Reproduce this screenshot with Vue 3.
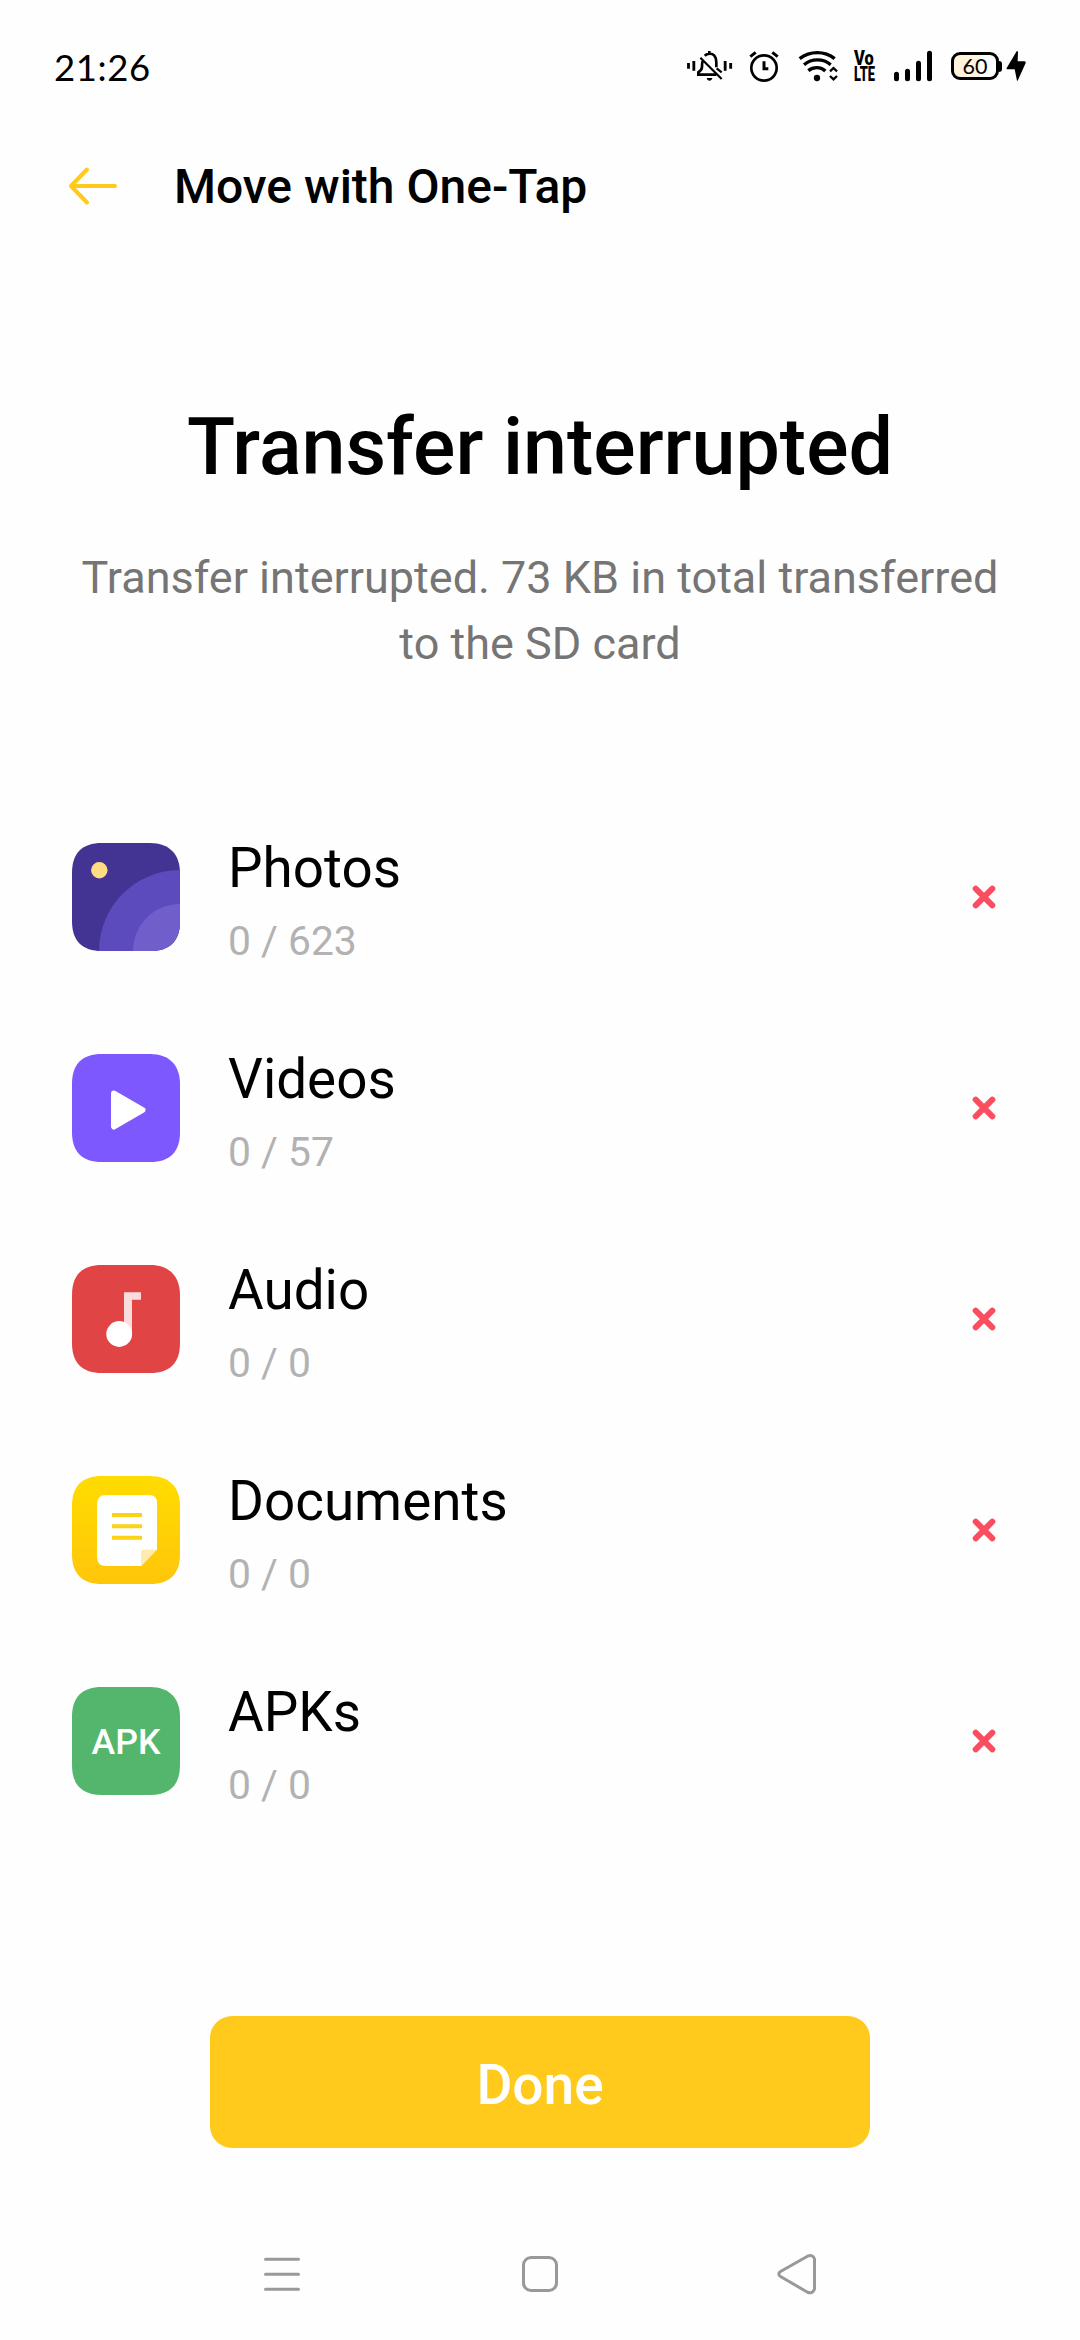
<script setup>
const items = [
  { kind: 'photos', name: 'Photos', count: '0 / 623' },
  { kind: 'videos', name: 'Videos', count: '0 / 57' },
  { kind: 'audio', name: 'Audio', count: '0 / 0' },
  { kind: 'documents', name: 'Documents', count: '0 / 0' },
  { kind: 'apks', name: 'APKs', count: '0 / 0' },
]
</script>

<template>
  <div class="screen">
    <header class="status">
      <span class="time">21:26</span>
      <div class="indicators">
        <!-- muted bell, vibrating -->
        <svg class="ic bell" viewBox="48 54 141 108" fill="none" stroke="#000">
          <path stroke-width="8.5" d="M55.5 99v17M71.500 93v29M165.500 93v29M182 99v17" />
          <path stroke-width="8" d="M118 63v7M104 77C112 70 126 69 133 77C138 83 139 90 139 97V112M98 93C96 98 96 104 96 111C96 118 94 121 85 127V134H139" />
          <path stroke-width="6.500" d="M91 83L155 147M140 115L155 127" />
          <path fill="#000" stroke="none" d="M110 144H127C125 155 112 155 110 144Z" />
        </svg>
        <!-- alarm clock -->
        <svg class="ic alarm" viewBox="234 54 96 108" fill="none" stroke="#000">
          <circle cx="282" cy="114" r="38" stroke-width="8" />
          <path stroke-width="9" d="M241 80L257 67M307 67L323 80M282 94V116H295" />
        </svg>
        <!-- wifi with traffic arrows -->
        <svg class="ic wifi" viewBox="384 54 123 108" fill="none" stroke="#000">
          <path stroke-width="10" d="M389 86C420 62 464 62 494 86M402 104C425 85 460 85 482 104M415 122C430 110 453 110 466 123" />
          <circle cx="441" cy="144" r="9.500" fill="#000" stroke="none" />
          <path stroke-width="7" d="M480 124L490.500 114L501 124M480 138L490.500 148L501 138" />
        </svg>
        <div class="volte"><span class="vo">Vo</span><span class="lte">LTE</span></div>
        <svg class="ic signal" viewBox="669 54 120 108" stroke="#000" stroke-width="15" stroke-linecap="round" fill="none">
          <path d="M679.500 133V146M712.500 124V146M745.500 100V146M778.500 70V146" />
        </svg>
        <div class="battery">
          <div class="cell"><span>60</span></div>
          <div class="nub"></div>
        </div>
        <svg class="ic bolt" viewBox="1008 54 63 108">
          <path d="M1040 64L1010 114Q1009 118 1013 118H1034L1041 152H1043L1067 99Q1068 94 1063 94H1043L1044 64Z" />
        </svg>
      </div>
    </header>

    <div class="toolbar">
      <svg class="back" viewBox="66 164 54 44" fill="none" stroke="#ffca1b" stroke-width="4" stroke-linecap="round" stroke-linejoin="round">
        <path d="M115 186H71L87 169.500M71 186L87 202.500" />
      </svg>
      <span class="title">Move with One-Tap</span>
    </div>

    <main>
      <h1>Transfer interrupted</h1>
      <p class="summary">Transfer interrupted. 73 KB in total transferred<br>to the SD card</p>

      <ul class="list">
        <li v-for="item in items" :key="item.kind" class="row">
          <svg class="tile" viewBox="0 0 108 108">
            <defs>
              <clipPath :id="'tile-' + item.kind">
                <path d="M30 0H78C98 0 108 12 108 30V78C108 98 98 108 78 108H30C10 108 0 98 0 78V30C0 10 10 0 30 0Z" />
              </clipPath>
              <linearGradient id="gold" x1="0" y1="0" x2="0" y2="1">
                <stop offset="0" stop-color="#ffdc00" />
                <stop offset="1" stop-color="#ffc60b" />
              </linearGradient>
            </defs>
            <g :clip-path="`url(#tile-${item.kind})`">
              <template v-if="item.kind === 'photos'">
                <rect width="108" height="108" fill="#433494" />
                <circle cx="108" cy="108" r="81" fill="#5c4bbd" />
                <circle cx="108" cy="108" r="47" fill="#705fcb" />
                <circle cx="27.300" cy="27.300" r="8.200" fill="#ffdb84" />
              </template>
              <template v-else-if="item.kind === 'videos'">
                <rect width="108" height="108" fill="#7d58ff" />
                <path d="M42 39.500L70.500 56L42 72.500Z" fill="#fff" stroke="#fff" stroke-width="6" stroke-linejoin="round" />
              </template>
              <template v-else-if="item.kind === 'audio'">
                <rect width="108" height="108" fill="#e04444" />
                <path d="M52 27.300H69V34.700H60V69H52Z" fill="#fbdcdc" />
                <circle cx="47.200" cy="69" r="12.900" fill="#fff" />
              </template>
              <template v-else-if="item.kind === 'documents'">
                <rect width="108" height="108" fill="url(#gold)" />
                <path d="M34 19H77Q85 19 85 27V73.500L69 90H34Q25 90 25 81V28Q25 19 34 19Z" fill="#fff" />
                <path d="M85 73.500H72Q69 73.500 69 76.500V90Z" fill="#ffebaf" />
                <path d="M40 39H70M40 50.300H70M40 61.800H70" stroke="#fcd116" stroke-width="4" />
              </template>
              <template v-else>
                <rect width="108" height="108" fill="#53b66c" />
                <text class="apk" x="54" y="66.700" text-anchor="middle" textLength="69" lengthAdjust="spacingAndGlyphs">APK</text>
              </template>
            </g>
          </svg>
          <div class="labels">
            <span class="name">{{ item.name }}</span>
            <span class="count">{{ item.count }}</span>
          </div>
          <svg class="cross" viewBox="0 0 24 24" stroke="#fb4d60" stroke-width="6" stroke-linecap="round">
            <path d="M3.700 3.700L20.300 20.300M20.300 3.700L3.700 20.300" />
          </svg>
        </li>
      </ul>
    </main>

    <button class="done" type="button">Done</button>

    <nav class="navbar">
      <svg viewBox="0 0 44 44" stroke="#999" stroke-width="3" stroke-linecap="round">
        <path d="M5.500 7.300H38.500M5.500 22.300H38.500M5.500 37.300H38.500" />
      </svg>
      <svg viewBox="0 0 44 44" fill="none" stroke="#999" stroke-width="3">
        <rect x="5.500" y="5.500" width="33" height="33" rx="7.500" />
      </svg>
      <svg viewBox="0 0 44 44" fill="none" stroke="#999" stroke-width="3" stroke-linejoin="round">
        <path d="M4.500 19.500L31.500 4.200Q37 2 38.500 7V37Q37 42 31.500 40.200L4.500 24.500Q1 22 4.500 19.500Z" />
      </svg>
    </nav>
  </div>
</template>

<style>
body {
  background: #fefefe;
}
</style>

<style scoped>
.screen {
  box-sizing: border-box;
  width: 1080px;
  height: 2340px;
  display: flex;
  flex-direction: column;
  background: #fefefe;
  color: #000;
  font-family: Roboto, "Liberation Sans", sans-serif;
  overflow: hidden;
}
svg {
  display: block;
  flex: none;
}
.status {
  height: 132px;
  display: flex;
  align-items: center;
  justify-content: space-between;
  padding: 0 53px 0 54px;
  box-sizing: border-box;
}
.time {
  font-family: Lato, "Liberation Sans", sans-serif;
  font-size: 36.500px;
  line-height: 44px;
  letter-spacing: 0.600px;
  padding-top: 1px;
}
.indicators {
  display: flex;
  align-items: center;
}
.ic {
  height: 36px;
}
.bell { width: 47px; margin-right: 15px; }
.alarm { width: 32px; margin-right: 18px; }
.wifi { width: 41px; margin-right: 15px; }
.volte {
  width: 23px;
  height: 32px;
  margin-right: 16px;
  display: flex;
  flex-direction: column;
  font-weight: 900;
  white-space: nowrap;
}
.volte span {
  font-size: 20px;
  line-height: 16px;
  transform-origin: 0 50%;
}
.vo { transform: scaleX(0.820); }
.lte { transform: scaleX(0.640); }
.signal { width: 40px; margin-right: 18px; }
.battery {
  display: flex;
  align-items: center;
  margin-right: 4px;
}
.cell {
  box-sizing: border-box;
  width: 48px;
  height: 28px;
  border: 3px solid #000;
  border-radius: 9px;
  background: linear-gradient(90deg, #fff3dc 62%, #fff 62%);
  display: flex;
  align-items: center;
  justify-content: center;
  font: 400 21.500px/22px Lato, sans-serif;
}
.nub {
  width: 3px;
  height: 11px;
  background: #000;
  border-radius: 0 3px 3px 0;
}
.bolt { width: 21px; }

.toolbar {
  height: 108px;
  display: flex;
  align-items: center;
  padding-left: 66px;
}
.back {
  width: 54px;
  height: 44px;
}
.title {
  margin-left: 54px;
  padding-top: 2px;
  font-size: 48px;
  line-height: 56px;
  font-weight: 500;
}
main {
  height: 1776px;
  display: flex;
  flex-direction: column;
}
h1 {
  margin: 161px 0 0;
  font-size: 79px;
  line-height: 92px;
  font-weight: 500;
  text-align: center;
}
.summary {
  margin: 52px 0 0;
  font-size: 45px;
  line-height: 66px;
  text-align: center;
  color: #757575;
}
.list {
  list-style: none;
  margin: 114px 0 0;
  padding: 0;
}
.row {
  height: 211px;
  display: flex;
  align-items: center;
  padding: 0 84px 0 72px;
}
.tile {
  width: 108px;
  height: 108px;
}
.apk {
  font-size: 35px;
  font-weight: 500;
  fill: #fff;
}
.labels {
  flex: 1;
  margin-left: 48px;
  padding-top: 9px;
  display: flex;
  flex-direction: column;
}
.name {
  font-size: 54.800px;
  line-height: 72px;
}
.count {
  font-size: 40.800px;
  line-height: 60px;
  padding-top: 7px;
  color: #b2b2b2;
}
.cross {
  width: 24px;
  height: 24px;
}
.done {
  flex: none;
  align-self: center;
  width: 660px;
  height: 132px;
  padding: 6px 0 0;
  border: 0;
  border-radius: 22px;
  background: #ffca1b;
  color: #fff;
  font: 500 55px/64px Roboto, sans-serif;
}
.navbar {
  margin-top: 60px;
  height: 132px;
  display: flex;
  justify-content: space-between;
  align-items: center;
  padding: 0 260px;
}
.navbar svg {
  width: 44px;
  height: 44px;
}
</style>
